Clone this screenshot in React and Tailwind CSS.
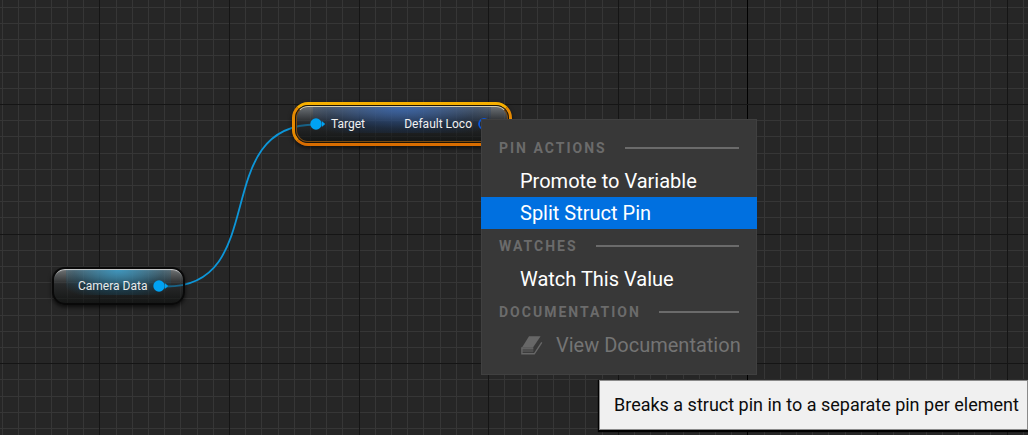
import React from "react";

const CELL = 16.2;
const ORIGIN_X = 747.4;
const ORIGIN_Y = 104;

function lineColor(index, darkest) {
  if (index === 0 && darkest) return "#000000";
  return index % 8 === 0 ? "#151515" : "#363636";
}

function Grid() {
  const columns = [];
  for (let i = -46; i < 160; i++) columns.push(i);
  const rows = [];
  for (let i = -6; i < 120; i++) rows.push(i);
  const minorFirst = (a, b) => (a % 8 === 0 ? 1 : 0) - (b % 8 === 0 ? 1 : 0);
  const lines = [
    ...columns.map((i) => ({ i, vertical: true })),
    ...rows.map((i) => ({ i, vertical: false })),
  ].sort((a, b) => minorFirst(a.i, b.i));
  return (
    <svg className="absolute inset-0 h-full w-full" shapeRendering="crispEdges" aria-hidden="true">
      {lines.map(({ i, vertical }) =>
        vertical ? (
          <rect key={"c" + i} x={Math.round(ORIGIN_X + i * CELL)} y="0" width="1" height="100%" fill={lineColor(i, true)} />
        ) : (
          <rect key={"r" + i} x="0" y={Math.round(ORIGIN_Y + i * CELL)} width="100%" height="1" fill={lineColor(i, false)} />
        )
      )}
    </svg>
  );
}

function Wire() {
  return (
    <svg className="absolute inset-0 h-full w-full" fill="none" aria-hidden="true">
      <path d="M166 286.5C272 286.5 208 124.5 316 124.5" stroke="#0d96d8" strokeWidth="1.8" />
    </svg>
  );
}

function Pin() {
  return (
    <svg className="h-3 w-4 shrink-0" viewBox="0 0 16 12" aria-hidden="true">
      <circle cx="6" cy="6" r="5.7" fill="#00a2f2" />
      <path d="M11.8 3 15.2 6l-3.4 3z" fill="#00a2f2" />
    </svg>
  );
}

function OpenPin() {
  return (
    <svg className="h-3 w-4 shrink-0" viewBox="0 0 16 12" fill="none" aria-hidden="true">
      <circle cx="6" cy="6" r="5" stroke="#0a55dc" strokeWidth="1.8" />
    </svg>
  );
}

function CameraNode() {
  return (
    <div className="absolute left-[52px] top-[267px] rounded-[13px] shadow-[0_2px_4px_rgba(0,0,0,0.7)]">
      <div className="relative flex h-[38px] w-[133px] items-center overflow-hidden rounded-[13px] border-2 border-[#090909] bg-linear-to-b from-[#85898b]/80 via-[#2a2e30]/45 via-45% to-[#0c0e0d]/65 pl-6 shadow-[inset_0_2px_1px_-1px_rgba(255,255,255,0.65)]">
        <div className="absolute inset-x-3 top-px bottom-2 bg-[radial-gradient(ellipse_at_top,rgba(55,155,200,0.85),rgba(20,95,130,0.35)_60%,transparent_90%)]" />
        <div className="relative flex items-center gap-1.5">
          <span className="whitespace-nowrap text-xs text-[#e8eaeb]">Camera Data</span>
          <Pin />
        </div>
      </div>
    </div>
  );
}

function TargetNode() {
  return (
    <div className="absolute left-[292px] top-[102px] h-11 w-[220px]">
      <div className="absolute inset-0 rounded-[16px] border-[3px] border-[#e68a00] border-t-[#f7b000] border-b-[#d96d00] shadow-[0_2px_4px_rgba(0,0,0,0.6)]" />
      <div className="relative m-[3px] h-[38px] rounded-[13px] border border-[#1a1408]">
        <div className="relative flex h-9 items-center justify-between overflow-hidden rounded-[12px] border border-[#7a4a10] border-t-[#d8cfae] bg-linear-to-b from-[#7b8288]/80 via-[#2a3036]/45 via-45% to-[#0c0e0d]/65 px-[13px]">
          <div className="absolute inset-x-4 top-0 bottom-2 bg-[radial-gradient(ellipse_at_top,rgba(50,100,180,0.8),rgba(22,55,105,0.35)_60%,transparent_90%)]" />
          <div className="relative flex items-center gap-[5px]">
            <Pin />
            <span className="text-xs text-[#f0f0f0]">Target</span>
          </div>
          <div className="relative flex items-center gap-1.5">
            <span className="whitespace-nowrap text-xs text-[#f0f0f0]">Default Loco</span>
            <OpenPin />
          </div>
        </div>
      </div>
    </div>
  );
}

function Section({ title, children }) {
  return (
    <section>
      <div className="flex h-[34px] items-center gap-[18px] px-[18px]">
        <h2 className="text-sm font-bold tracking-[2px] text-[#6b6b6b]">{title}</h2>
        <div className="h-0.5 flex-1 bg-[#6b6b6b]" />
      </div>
      {children}
    </section>
  );
}

function Item({ children, active, disabled }) {
  const tone = active ? "bg-[#0070e0] text-white" : disabled ? "text-[#747474]" : "text-white";
  return (
    <button
      type="button"
      role="menuitem"
      disabled={disabled}
      className={"flex h-8 w-full items-center gap-3 pl-[39px] text-left text-xl whitespace-nowrap " + tone}
    >
      {children}
    </button>
  );
}

function BookIcon() {
  return (
    <svg className="h-6 w-6 shrink-0" viewBox="0 0 24 24" aria-hidden="true">
      <path d="M9 3.2h11.6L13 14.6H2z" fill="#676767" />
      <path d="M2 14.4h11.4v4.8H2z" fill="#4e4e4e" />
      <path d="M1.9 14.3v6.5h12.4L21.8 9.4" fill="none" stroke="#676767" strokeWidth="1.4" />
      <path d="M2 14.4h11.2v1.4H2z" fill="#676767" />
    </svg>
  );
}

function PinMenu() {
  return (
    <div
      role="menu"
      className="absolute left-[481px] top-[119px] w-[276px] bg-[#383838] pt-3 pb-3.5 shadow-[inset_0_0_0_1px_#404040]"
    >
      <Section title="PIN ACTIONS">
        <Item>Promote to Variable</Item>
        <Item active>Split Struct Pin</Item>
      </Section>
      <Section title="WATCHES">
        <Item>Watch This Value</Item>
      </Section>
      <Section title="DOCUMENTATION">
        <Item disabled>
          <BookIcon />
          View Documentation
        </Item>
      </Section>
    </div>
  );
}

export default function App() {
  return (
    <main className="relative min-h-screen overflow-hidden bg-[#262626] font-['Roboto','Liberation_Sans',sans-serif]">
      <Grid />
      <Wire />
      <CameraNode />
      <TargetNode />
      <PinMenu />
      <div
        role="tooltip"
        className="absolute left-[599px] top-[380px] border border-[#8a8a8a] bg-[#f0f0f0] py-3 pr-2 pl-3.5 text-lg leading-6 whitespace-nowrap text-[#0c0c0c] shadow-[0_1px_1px_1px_#000]"
      >
        Breaks a struct pin in to a separate pin per element
      </div>
    </main>
  );
}
